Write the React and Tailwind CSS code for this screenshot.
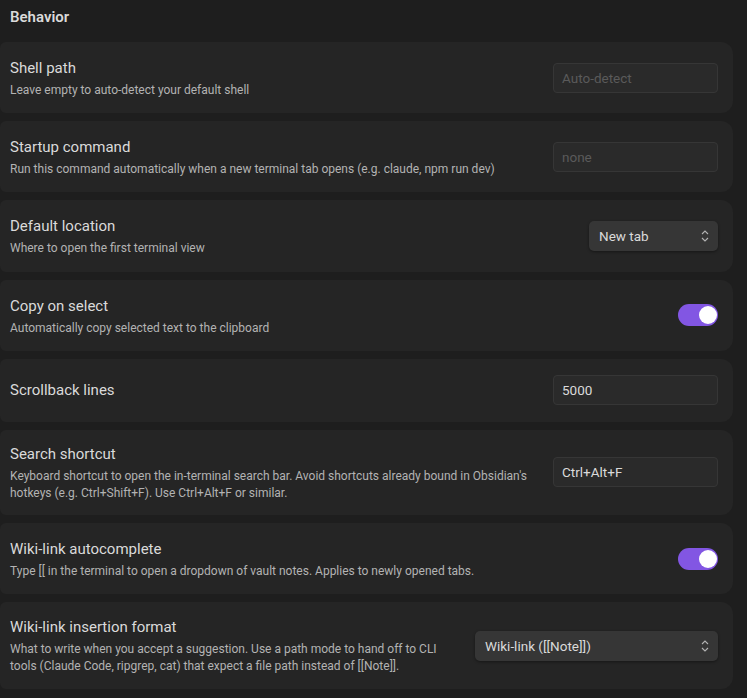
import React from "react";

function Card({ title, desc, children, h }) {
  return (
    <div className={`${h} flex items-center justify-between gap-6 rounded-r-[12px] rounded-l-[6px] bg-[#252525] pl-[10px] pr-[15px] w-[733px]`}>
      <div className={`min-w-0 flex-1 ${desc ? "pt-[1px]" : "pb-[2px]"}`}>
        <div className="text-[15px] leading-[20px] text-[#dadada]">{title}</div>
        {desc && <div className="mt-[4px] text-[12px] leading-[17px] text-[#b3b3b3]">{desc}</div>}
      </div>
      {children}
    </div>
  );
}

function Input({ placeholder, value, shift }) {
  return (
    <div className={`${shift ? "mb-[2px]" : ""} flex h-[30px] w-[165px] shrink-0 items-center rounded-[4px] border border-[#363636] bg-[#2a2a2a] px-[8px] pt-[1px] text-[13.5px] ${value ? "text-[#dadada]" : "text-[#5a5a5a]"}`}>
      {value || placeholder}
    </div>
  );
}

function Select({ label, w }) {
  return (
    <div className={`${w} flex h-[30px] shrink-0 items-center justify-between rounded-[5px] bg-[#363636] pl-[10px] pr-[9px] text-[13.5px] text-[#dadada] shadow-[0_1px_3px_rgba(0,0,0,0.4)]`}>
      <span className="pt-[1px]">{label}</span>
      <svg width="8" height="14" viewBox="0 0 8 14" fill="none" stroke="#b3b3b3" strokeWidth="1.1">
        <path d="M1 5 L4 2 L7 5" />
        <path d="M1 9 L4 12 L7 9" />
      </svg>
    </div>
  );
}

function Toggle({ shift }) {
  return (
    <div className={`${shift ? "mb-[2px]" : ""} flex h-[22px] w-[40px] shrink-0 items-center justify-end rounded-full bg-[#8256e3] pr-[1px]`}>
      <div className="h-[18px] w-[18px] rounded-full bg-white" />
    </div>
  );
}

export default function App() {
  return (
    <div className="h-[698px] w-[747px] overflow-hidden bg-[#1e1e1e] font-['Roboto','Noto_Sans',sans-serif]">
      <div className="flex h-[42px] items-start pl-[10px] pt-[7px] text-[15px] font-semibold leading-[20px] text-[#dadada]">Behavior</div>
      <div className="flex flex-col gap-[8px]">
        <Card h="h-[71px]" title="Shell path" desc="Leave empty to auto-detect your default shell">
          <Input placeholder="Auto-detect" />
        </Card>
        <Card h="h-[71px]" title="Startup command" desc="Run this command automatically when a new terminal tab opens (e.g. claude, npm run dev)">
          <Input placeholder="none" />
        </Card>
        <Card h="h-[72px]" title="Default location" desc="Where to open the first terminal view">
          <Select label="New tab" w="w-[129px]" />
        </Card>
        <Card h="h-[71px]" title="Copy on select" desc="Automatically copy selected text to the clipboard">
          <Toggle shift />
        </Card>
        <Card h="h-[63px]" title="Scrollback lines">
          <Input value="5000" shift />
        </Card>
        <Card h="h-[85px]" title="Search shortcut" desc="Keyboard shortcut to open the in-terminal search bar. Avoid shortcuts already bound in Obsidian's hotkeys (e.g. Ctrl+Shift+F). Use Ctrl+Alt+F or similar.">
          <Input value="Ctrl+Alt+F" shift />
        </Card>
        <Card h="h-[71px]" title="Wiki-link autocomplete" desc="Type [[ in the terminal to open a dropdown of vault notes. Applies to newly opened tabs.">
          <Toggle />
        </Card>
        <Card h="h-[87px]" title="Wiki-link insertion format" desc="What to write when you accept a suggestion. Use a path mode to hand off to CLI tools (Claude Code, ripgrep, cat) that expect a file path instead of [[Note]].">
          <Select label="Wiki-link ([[Note]])" w="w-[243px]" />
        </Card>
      </div>
    </div>
  );
}
